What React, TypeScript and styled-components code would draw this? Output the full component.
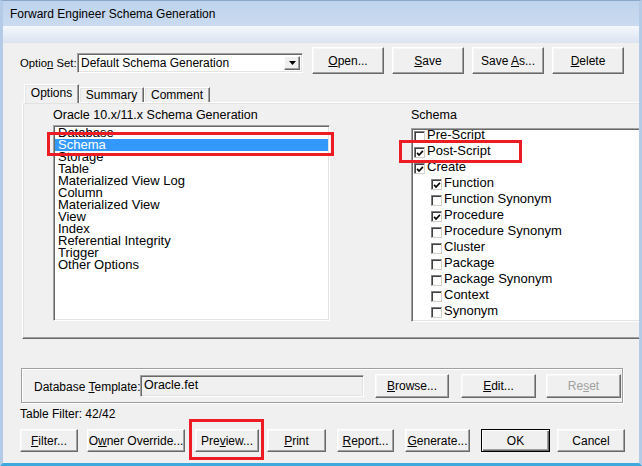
import styled, { createGlobalStyle } from 'styled-components';

const GlobalStyle = createGlobalStyle`
  * { box-sizing: border-box; }
  html, body { margin: 0; padding: 0; background: #f0f0f0; }
  body {
    font-family: 'Liberation Sans', Arial, sans-serif;
    font-size: 12px;
    color: #000;
  }
`;

const listItems = [
  'Database',
  'Schema',
  'Storage',
  'Table',
  'Materialized View Log',
  'Column',
  'Materialized View',
  'View',
  'Index',
  'Referential Integrity',
  'Trigger',
  'Other Options',
];

type CheckItem = { label: string; level: number; checked?: boolean };

const checkItems: CheckItem[] = [
  { label: 'Pre-Script', level: 0 },
  { label: 'Post-Script', level: 0, checked: true },
  { label: 'Create', level: 0, checked: true },
  { label: 'Function', level: 1, checked: true },
  { label: 'Function Synonym', level: 1 },
  { label: 'Procedure', level: 1, checked: true },
  { label: 'Procedure Synonym', level: 1 },
  { label: 'Cluster', level: 1 },
  { label: 'Package', level: 1 },
  { label: 'Package Synonym', level: 1 },
  { label: 'Context', level: 1 },
  { label: 'Synonym', level: 1 },
  { label: 'Sequence', level: 1 },
];

const CheckMark = () => (
  <svg width="9" height="9" viewBox="0 0 9 9">
    <polyline points="1.2,3.8 3.4,6.2 7.8,1.6" fill="none" stroke="#000" strokeWidth="1.8" />
  </svg>
);

const App = () => {
  return (
    <>
      <GlobalStyle />
      <Frame>
        <TitleBar>Forward Engineer Schema Generation</TitleBar>
        <Band />
        <Body>
          <OptionRow>
            <FieldLabel $w={57} $size={11.3}>
              Optio<u>n</u> Set:
            </FieldLabel>
            <Combo>
              <ComboText>Default Schema Generation</ComboText>
              <ComboButton>
                <svg width="7" height="4" viewBox="0 0 7 4">
                  <polygon points="0,0 7,0 3.5,4" fill="#000" />
                </svg>
              </ComboButton>
            </Combo>
            <Btn $w={72} $h={27} $ml={9}>
              <u>O</u>pen...
            </Btn>
            <Btn $w={72} $h={27} $ml={8}>
              <u>S</u>ave
            </Btn>
            <Btn $w={72} $h={27} $ml={8}>
              Save <u>A</u>s...
            </Btn>
            <Btn $w={72} $h={27} $ml={8}>
              <u>D</u>elete
            </Btn>
          </OptionRow>

          <TabRow>
            <Tab $active $w={55}>Options</Tab>
            <Tab $w={65}>Summary</Tab>
            <Tab $w={66}>Comment</Tab>
          </TabRow>
          <Panel>
            <Column $w={277}>
              <Header>Oracle 10.x/11.x Schema Generation</Header>
              <ListWrap $mt={3} $h={196}>
                <ListBox>
                  {listItems.map((item) => (
                    <ListRow key={item} $selected={item === 'Schema'}>
                      {item}
                    </ListRow>
                  ))}
                </ListBox>
                <Marker style={{ left: -6, top: 7, width: 287, height: 24 }} />
              </ListWrap>
            </Column>
            <Column $w={240} $ml={81}>
              <Header>Schema</Header>
              <ListWrap $mt={6} $h={194}>
                <ListBox>
                  <CheckList>
                    {checkItems.map((item) => (
                      <CheckRow key={item.label} $level={item.level}>
                        <Box>{item.checked && <CheckMark />}</Box>
                        <span>{item.label}</span>
                      </CheckRow>
                    ))}
                  </CheckList>
                </ListBox>
                <Marker style={{ left: -12, top: 12, width: 123, height: 23 }} />
              </ListWrap>
            </Column>
          </Panel>

          <GroupBox>
            <FieldLabel $w={106}>
              Database <u>T</u>emplate:
            </FieldLabel>
            <ReadOnlyInput>Oracle.fet</ReadOnlyInput>
            <Btn $w={74} $h={24} $ml={11}>
              <u>B</u>rowse...
            </Btn>
            <Btn $w={75} $h={24} $ml={12}>
              <u>E</u>dit...
            </Btn>
            <Btn $w={75} $h={24} $ml={10} disabled>
              Re<u>s</u>et
            </Btn>
          </GroupBox>

          <FilterText>Table Filter: 42/42</FilterText>

          <ButtonRow>
            <Btn $w={58} $h={23}>
              <u>F</u>ilter...
            </Btn>
            <Btn $w={98} $h={23} $ml={9}>
              O<u>w</u>ner Override...
            </Btn>
            <Marked $ml={10}>
              <Btn $w={64} $h={23}>
                Pre<u>v</u>iew...
              </Btn>
              <Marker style={{ left: -6, top: -10, width: 75, height: 41 }} />
            </Marked>
            <Btn $w={59} $h={23} $ml={8}>
              <u>P</u>rint
            </Btn>
            <Btn $w={57} $h={23} $ml={11}>
              <u>R</u>eport...
            </Btn>
            <Btn $w={65} $h={23} $ml={11}>
              <u>G</u>enerate...
            </Btn>
            <Btn $w={69} $h={23} $ml={11} $default>
              OK
            </Btn>
            <Btn $w={68} $h={23} $ml={7}>
              Cancel
            </Btn>
          </ButtonRow>
        </Body>
      </Frame>
    </>
  );
};

export default App;

const Frame = styled.div`
  width: 642px;
  height: 466px;
  overflow: hidden;
  display: flex;
  flex-direction: column;
  background: #f0f0f0;
`;

const TitleBar = styled.div`
  height: 26px;
  flex: none;
  display: flex;
  align-items: center;
  padding-left: 7px;
  font-size: 12px;
  background: linear-gradient(#bed3ec, #cadbf0);
  border-top: 1px solid #8aa6c8;
  border-left: 3px solid #b3cbe7;
  border-right: 3px solid #b3cbe7;
`;

const Band = styled.div`
  height: 17px;
  flex: none;
  background: linear-gradient(#f5f8fc, #dae3f0);
  border-left: 3px solid #b3cbe7;
  border-right: 3px solid #b3cbe7;
`;

const Body = styled.div`
  flex: 1;
  display: flex;
  flex-direction: column;
  overflow: hidden;
  border-left: 3px solid #b3cbe7;
  border-right: 3px solid #b3cbe7;
  border-bottom: 3px solid #3ea9dd;
`;

const OptionRow = styled.div`
  display: flex;
  align-items: flex-start;
  height: 27px;
  margin-top: 4px;
  padding-left: 17px;
`;

const FieldLabel = styled.div<{ $w: number; $size?: number }>`
  width: ${({ $w }) => $w}px;
  flex: none;
  white-space: nowrap;
  line-height: 20px;
  margin-top: 6px;
  font-size: ${({ $size }) => $size ?? 12}px;
`;

const Combo = styled.div`
  width: 226px;
  height: 20px;
  margin-top: 6px;
  display: flex;
  align-items: stretch;
  background: #fff;
  border: 1px solid;
  border-color: #a0a0a0 #fff #fff #a0a0a0;
  box-shadow: inset 1px 1px #696969, inset -1px -1px #e3e3e3;
  padding: 2px;
`;

const ComboText = styled.div`
  flex: 1;
  padding-left: 1px;
  line-height: 15px;
  font-size: 12px;
  white-space: nowrap;
`;

const ComboButton = styled.div`
  width: 16px;
  display: flex;
  align-items: center;
  justify-content: center;
  background: #f0f0f0;
  border: 1px solid;
  border-color: #fff #696969 #696969 #fff;
  box-shadow: inset -1px -1px #a0a0a0;
`;

const Btn = styled.button<{ $w: number; $h: number; $ml?: number; $default?: boolean }>`
  width: ${({ $w }) => $w}px;
  height: ${({ $h }) => $h}px;
  margin-left: ${({ $ml }) => $ml ?? 0}px;
  flex: none;
  padding: 0;
  background: #f0f0f0;
  font-family: 'Liberation Sans', Arial, sans-serif;
  font-size: 12px;
  color: #000;
  white-space: nowrap;
  border: 1px solid;
  border-color: ${({ $default }) =>
    $default ? '#000' : '#fff #696969 #696969 #fff'};
  box-shadow: ${({ $default }) =>
    $default
      ? 'inset 1px 1px #fff, inset -1px -1px #696969, inset -2px -2px #a0a0a0'
      : 'inset -1px -1px #a0a0a0, inset 1px 1px #f8f8f8'};

  &:disabled {
    color: #a0a0a0;
  }
`;

const TabRow = styled.div`
  display: flex;
  align-items: flex-end;
  height: 18px;
  margin-top: 10px;
  padding-left: 21px;
  position: relative;
  z-index: 1;
`;

const Tab = styled.div<{ $active?: boolean; $w: number }>`
  width: ${({ $w }) => $w}px;
  height: ${({ $active }) => ($active ? 19 : 15)}px;
  margin-bottom: ${({ $active }) => ($active ? -1 : 0)}px;
  display: flex;
  align-items: center;
  justify-content: center;
  padding-bottom: ${({ $active }) => ($active ? 2 : 0)}px;
  font-size: 12px;
  background: #f0f0f0;
  border-top: 1px solid #fff;
  border-left: 1px solid #fff;
  border-right: 1px solid #696969;
  box-shadow: inset -1px 0 #a0a0a0, inset 1px 1px #e3e3e3;
`;

const Panel = styled.div`
  width: 700px;
  height: 237px;
  flex: none;
  margin-left: 19px;
  display: flex;
  padding-left: 30px;
  border-top: 1px solid #fff;
  border-left: 1px solid #fff;
  border-bottom: 1px solid #696969;
  box-shadow: inset 0 -1px #a0a0a0, inset 1px 1px #e3e3e3;
`;

const Column = styled.div<{ $w: number; $ml?: number }>`
  width: ${({ $w }) => $w}px;
  margin-left: ${({ $ml }) => $ml ?? 0}px;
  display: flex;
  flex-direction: column;
  padding-top: 5px;
`;

const Header = styled.div`
  height: 14px;
  line-height: 14px;
  font-size: 12.5px;
  white-space: nowrap;
`;

const ListWrap = styled.div<{ $mt: number; $h: number }>`
  position: relative;
  margin-top: ${({ $mt }) => $mt}px;
  height: ${({ $h }) => $h}px;
`;

const ListBox = styled.div`
  height: 100%;
  overflow: hidden;
  background: #fff;
  border: 1px solid;
  border-color: #a0a0a0 #fff #fff #a0a0a0;
  box-shadow: inset 1px 1px #696969, inset -1px -1px #e3e3e3;
  padding: 1px;
`;

const ListRow = styled.div<{ $selected?: boolean }>`
  height: 12px;
  line-height: 12px;
  padding-left: 3px;
  font-size: 13px;
  white-space: nowrap;
  background: ${({ $selected }) => ($selected ? '#3399ff' : 'transparent')};
  color: ${({ $selected }) => ($selected ? '#fff' : '#000')};
`;

const CheckList = styled.div`
  margin-top: -4px;
`;

const CheckRow = styled.div<{ $level: number }>`
  height: 16px;
  display: flex;
  align-items: center;
  padding-left: ${({ $level }) => 1 + $level * 17}px;
  font-size: 13px;
  white-space: nowrap;
  gap: 2px;
`;

const Box = styled.div`
  width: 11px;
  height: 11px;
  margin-top: 5px;
  flex: none;
  display: flex;
  align-items: center;
  justify-content: center;
  background: #fff;
  border: 1px solid;
  border-color: #808080 #d4d0c8 #d4d0c8 #808080;
  box-shadow: inset 1px 1px #404040;
  padding: 1px 0 0 1px;
`;

const Marker = styled.div`
  position: absolute;
  border: 3px solid #ed1c24;
  pointer-events: none;
`;

const Marked = styled.div<{ $ml?: number }>`
  position: relative;
  margin-left: ${({ $ml }) => $ml ?? 0}px;
  display: flex;
`;

const GroupBox = styled.div`
  width: 602px;
  height: 35px;
  flex: none;
  margin-top: 29px;
  margin-left: 18px;
  display: flex;
  align-items: center;
  padding-left: 12px;
  border: 1px solid #a0a0a0;
  box-shadow: inset 1px 1px #fff, 1px 1px #fff;

  ${FieldLabel} {
    margin-top: 2px;
  }
`;

const ReadOnlyInput = styled.div`
  width: 224px;
  height: 22px;
  flex: none;
  padding: 2px 0 0 3px;
  font-size: 12.5px;
  background: #f0f0f0;
  border: 1px solid;
  border-color: #a0a0a0 #fff #fff #a0a0a0;
  box-shadow: inset 1px 1px #696969, inset -1px -1px #e3e3e3;
`;

const FilterText = styled.div`
  margin-top: 4px;
  height: 14px;
  line-height: 14px;
  padding-left: 17px;
  font-size: 12px;
`;

const ButtonRow = styled.div`
  display: flex;
  margin-top: 8px;
  padding-left: 17px;
`;
